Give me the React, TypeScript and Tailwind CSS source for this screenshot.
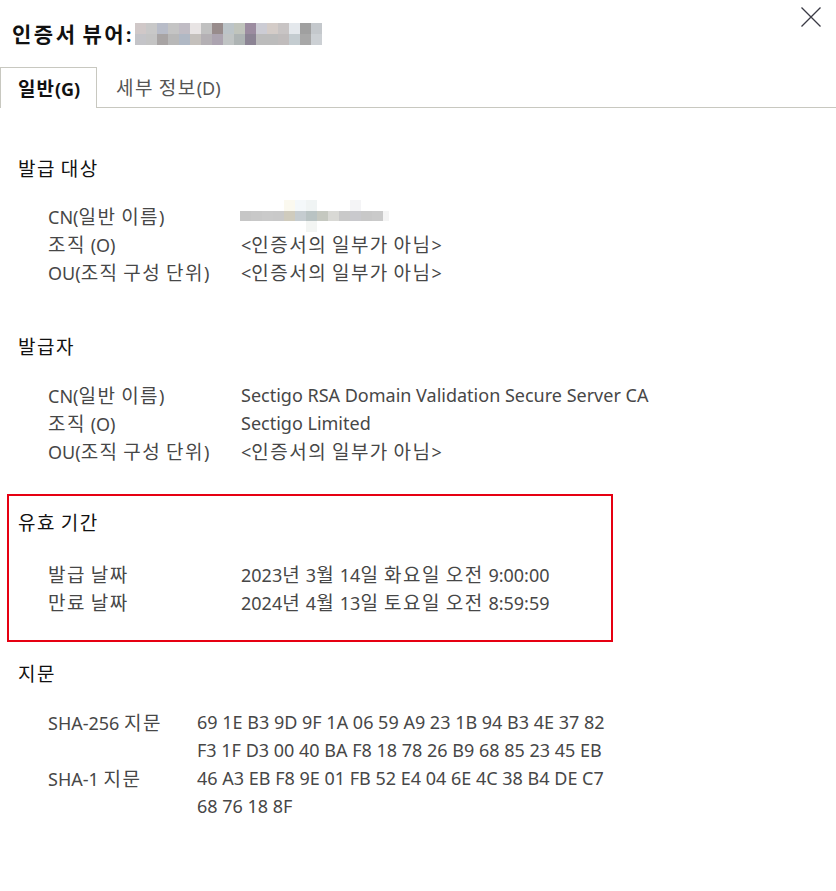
import React from "react";

function K({ t, bold = false, big = false }: { t: string; bold?: boolean; big?: boolean }) {
  const parts = t.split(/([\uAC00-\uD7A3]+)/);
  return (
    <span className="whitespace-pre">
      {parts.map((p, i) =>
        i % 2 === 1 ? (
          <span
            key={i}
            className={
              big
                ? "font-['Noto_Sans_CJK_KR'] text-[21px] font-bold tracking-[2.5px]"
                : bold
                ? "font-['Noto_Sans_CJK_KR'] text-[19px] font-bold tracking-[1px]"
                : "font-['Noto_Sans_CJK_KR'] text-[19px] tracking-[1.5px]"
            }
          >
            {p}
          </span>
        ) : (
          <span key={i}>{p}</span>
        )
      )}
    </span>
  );
}

const titleRow1 = ["#d0c8c8", "#c8c8c8", "#b8bcc8", "#c4c4c4", "#c0bcc4", "#e8e4e4", "#c0c0c0", "#988c8c", "#bcc4c8", "#c0c4bc", "#9c8ca0", "#ccccd4", "#d4ccc8", "#c8c4c4", "#e4e8ec", "#a0a0a0", "#c4c8cc"];
const titleRow2 = ["#c4c4c8", "#c4c4c4", "#a8a4a4", "#b8b8b8", "#b0b8c4", "#c4c0bc", "#b4b0b4", "#aca4b0", "#c0c4c4", "#aeb4b4", "#8c8494", "#bcbcbc", "#bcbcbc", "#c0bcbc", "#c4ccd0", "#a8a8a8", "#ccd0d4"];
const cnRow = ["#c6c6c6", "#c8c8c8", "#cacaca", "#c9c9c9", "#cfcbbd", "#c5ccd0", "#b9c3c3", "#c5c8c0", "#d9d9d5", "#c9c9c9", "#c9c9cd", "#c8c8c8", "#cacaca"];

function TitleMosaic() {
  return (
    <svg width="187" height="22" viewBox="0 0 187 22" className="block">
      {titleRow1.map((c, i) => (
        <rect key={"a" + i} x={i * 11} y={0} width={11} height={11} fill={c} />
      ))}
      {titleRow2.map((c, i) => (
        <rect key={"b" + i} x={i * 11} y={11} width={11} height={11} fill={c} />
      ))}
    </svg>
  );
}

function CnMosaic() {
  return (
    <svg width="150" height="32" viewBox="0 0 150 32" className="block">
      <rect x={44} y={0} width={11} height={11} fill="#fbf9ef" />
      <rect x={55} y={0} width={11} height={11} fill="#f4f8fa" />
      <rect x={66} y={0} width={11} height={11} fill="#f0f4f4" />
      <rect x={110} y={0} width={11} height={11} fill="#f4f4f6" />
      {cnRow.map((c, i) => (
        <rect key={i} x={i * 11} y={11} width={11} height={10} fill={c} />
      ))}
      <rect x={66} y={21} width={11} height={11} fill="#f3f5f3" />
      <rect x={143} y={11} width={6} height={10} fill="#f4f4f4" />
    </svg>
  );
}

function Row({ label, value, valueX = "w-[193px]" }: { label: string; value: React.ReactNode; valueX?: string }) {
  return (
    <div className="flex h-[28px] items-center pl-[48px] text-[18px] text-[#474747]">
      <div className={valueX + " shrink-0 whitespace-nowrap"}>
        <K t={label} />
      </div>
      <div className="whitespace-nowrap">{value}</div>
    </div>
  );
}

function Heading({ t }: { t: string }) {
  return (
    <div className="flex h-[28px] items-center pl-[18px] text-[18px] text-[#111]">
      <K t={t} />
    </div>
  );
}

const NOT = "<인증서의 일부가 아님>";

export default function App() {
  return (
    <div className="w-[836px] h-[891px] bg-white font-['Noto_Sans'] overflow-hidden">
      <div className="flex h-[67px] items-start justify-between">
        <div className="flex items-center pl-[12px] pt-[23px] gap-[4px]">
          <div className="h-[22px] flex items-center text-[19px] font-bold text-[#111] whitespace-nowrap">
            <K t="인증서 뷰어:" big />
          </div>
          <TitleMosaic />
        </div>
        <svg width="22" height="22" viewBox="0 0 22 22" className="mt-[6px] mr-[14px]">
          <path d="M1.5 1.5 L20.5 20.5 M20.5 1.5 L1.5 20.5" stroke="#3a3a44" strokeWidth="1.3" fill="none" />
        </svg>
      </div>

      <div className="flex h-[41px] items-stretch">
        <div className="w-[97px] border-l border-t border-r border-[#c8c8c0] bg-white flex items-center pl-[17px] text-[18px] font-bold text-[#111]">
          <K t="일반(G)" bold />
        </div>
        <div className="border-b border-[#c8c8c0] flex items-center pl-[19px] pr-[10px] text-[18px] text-[#555]">
          <K t="세부 정보(D)" />
        </div>
        <div className="flex-1 border-b border-[#c8c8c0]" />
      </div>

      <div className="mt-[46px]">
        <Heading t="발급 대상" />
        <div className="mt-[20px]">
          <Row label="CN(일반 이름)" value={<div className="-ml-[1px]"><CnMosaic /></div>} />
          <Row label="조직 (O)" value={<K t={NOT} />} />
          <Row label="OU(조직 구성 단위)" value={<K t={NOT} />} />
        </div>
      </div>

      <div className="mt-[46px]">
        <Heading t="발급자" />
        <div className="mt-[21px]">
          <Row label="CN(일반 이름)" value="Sectigo RSA Domain Validation Secure Server CA" />
          <Row label="조직 (O)" value="Sectigo Limited" />
          <Row label="OU(조직 구성 단위)" value={<K t={NOT} />} />
        </div>
      </div>

      <div className="mt-[29px] ml-[7px] w-[606px] border-2 border-[#e60012] pt-[12px] pb-[24px]">
        <div className="-ml-[9px]">
          <Heading t="유효 기간" />
          <div className="mt-[24px]">
            <Row label="발급 날짜" value={<K t="2023년 3월 14일 화요일 오전 9:00:00" />} />
            <Row label="만료 날짜" value={<K t="2024년 4월 13일 토요일 오전 8:59:59" />} />
          </div>
        </div>
      </div>

      <div className="mt-[17px]">
        <Heading t="지문" />
        <div className="mt-[21px]">
          <Row valueX="w-[149px]" label="SHA-256 지문" value="69 1E B3 9D 9F 1A 06 59 A9 23 1B 94 B3 4E 37 82" />
          <Row valueX="w-[149px]" label="" value="F3 1F D3 00 40 BA F8 18 78 26 B9 68 85 23 45 EB" />
          <Row valueX="w-[149px]" label="SHA-1 지문" value="46 A3 EB F8 9E 01 FB 52 E4 04 6E 4C 38 B4 DE C7" />
          <Row valueX="w-[149px]" label="" value="68 76 18 8F" />
        </div>
      </div>
    </div>
  );
}
